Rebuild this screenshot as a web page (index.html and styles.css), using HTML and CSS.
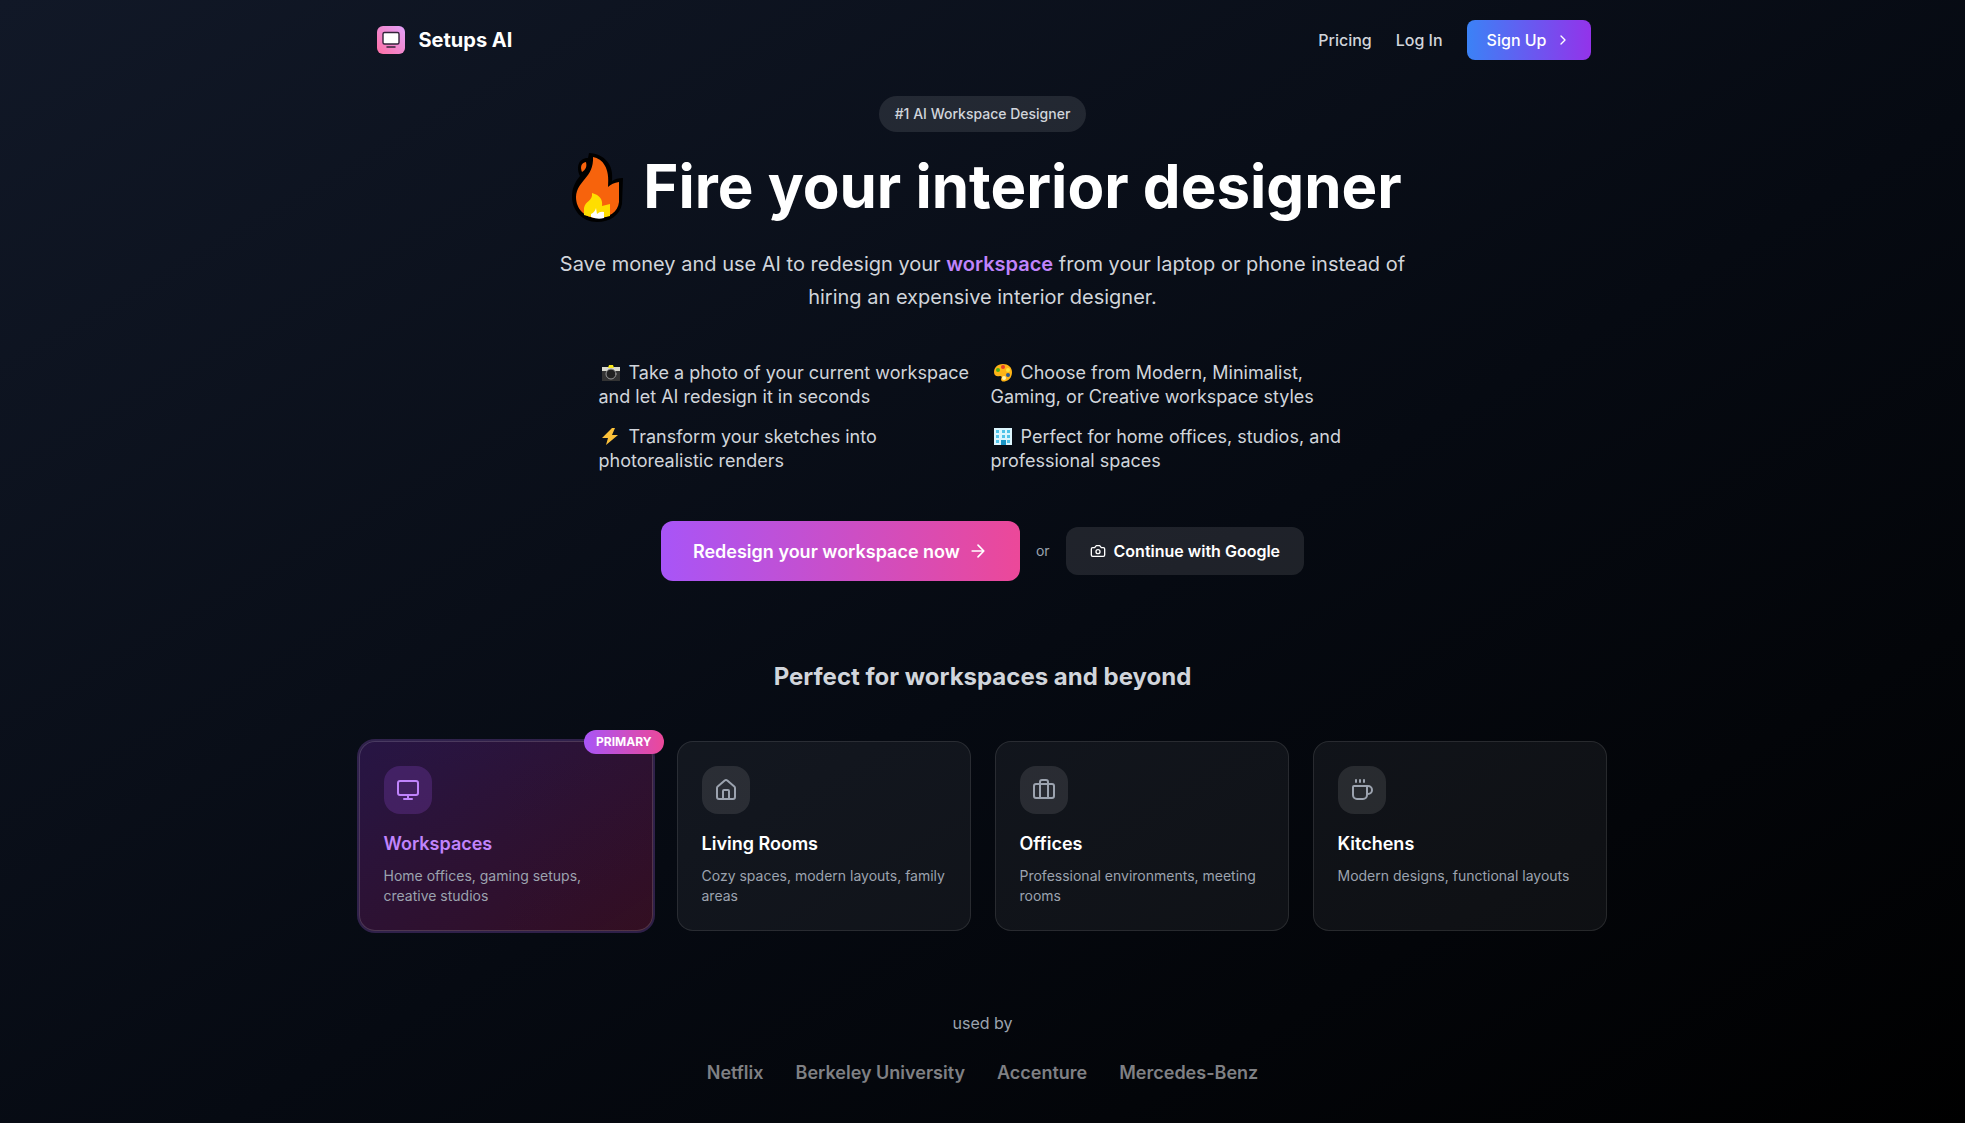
FILE: index.html
```html
<!DOCTYPE html>
<html lang="en">
<head>
    <meta charset="UTF-8">
    <meta name="viewport" content="width=device-width, initial-scale=1.0">
    <title>Setups AI</title>
    <link rel="stylesheet" href="styles.css">
</head>
<body>
    <header class="navbar">
        <a class="brand" href="#">
            <svg class="brand-logo" viewBox="0 0 32 32">
                <defs>
                    <linearGradient id="logoFill" x1="0" y1="1" x2="1" y2="0">
                        <stop offset="0" stop-color="#ff6fa3"/>
                        <stop offset="1" stop-color="#e3a2fb"/>
                    </linearGradient>
                </defs>
                <rect x="2" y="2" width="28" height="28" rx="6" fill="url(#logoFill)"/>
                <rect x="8" y="8.5" width="16" height="11.5" rx="1.5" fill="#fff" stroke="#33233a" stroke-width="1.4"/>
                <path d="M12 23h8" stroke="#33233a" stroke-width="1.5" stroke-linecap="round"/>
            </svg>
            <span>Setups AI</span>
        </a>
        <nav class="nav-links">
            <a href="#pricing">Pricing</a>
            <a href="#login">Log In</a>
            <button class="btn-signup" type="button">
                Sign Up
                <svg class="icon-sm" viewBox="0 0 24 24"><path d="m9 18 6-6-6-6"/></svg>
            </button>
        </nav>
    </header>

    <main class="container">
        <!-- Hero -->
        <section class="hero">
            <span class="badge">#1 AI Workspace Designer</span>
            <h1>
                <svg class="flame" viewBox="0 0 64 72">
                    <path d="M26 3C42 4 51 15 49 31Q53 28 60 28L59 54C57 65 47 72 34 72C19 72 9 60 9 47C9 38 12 32 17 26C13 18 15 8 25 8Z" fill="#000"/>
                    <path d="M30 7C40 9 47 18 45 37Q49 33 56 32V52C55 62 46 68 34 68C22 68 13 59 13 47C14 30 31 28 30 7Z" fill="#f7630c"/>
                    <path d="M23 12C18 13 17 17 19 22C23 19 24 17 23 12Z" fill="#f7630c"/>
                    <path d="M29 43C37 45 40 50 39 56L47 54V66Q35 70 21 65V58C22 51 30 51 29 43Z" fill="#ffde00"/>
                    <path d="M33 58L34 64Q37 61 41 62V68Q35 70 28 67V64Q32 62 33 58Z" fill="#fff"/>
                </svg>
                Fire your interior designer
            </h1>
            <p class="lead">Save money and use AI to redesign your <strong>workspace</strong> from your laptop or phone instead of hiring an expensive interior designer.</p>

            <ul class="features">
                <li>
                    <svg class="emoji" viewBox="0 0 25 20">
                        <rect x="3" y="4" width="18" height="14" fill="#333"/>
                        <path d="M3 4h18v4H3z" fill="#d9d9cf"/>
                        <path d="M9 5l1-3h4l1 3z" fill="#f8e71c"/>
                        <circle cx="12" cy="11" r="5" fill="#222" stroke="#999" stroke-width="1"/>
                    </svg>
                    Take a photo of your current workspace and let AI redesign it in seconds
                </li>
                <li>
                    <svg class="emoji" viewBox="0 0 25 20">
                        <path d="M12 1C6 1 3 5 3 9c0 4 3 5 6 4 2 0 2 1 1 3 0 3 3 3 5 2 4-1 6-5 6-9 0-5-4-8-9-8z" fill="#ffb416"/>
                        <circle cx="7" cy="7" r="2" fill="#4caf1c"/>
                        <circle cx="12" cy="4" r="2" fill="#e5402a"/>
                        <circle cx="17" cy="7" r="2" fill="#ffe13b"/>
                        <circle cx="17" cy="12" r="2" fill="#2c5792"/>
                        <circle cx="13" cy="15" r="2" fill="#fff3b0"/>
                    </svg>
                    Choose from Modern, Minimalist, Gaming, or Creative workspace styles
                </li>
                <li>
                    <svg class="emoji" viewBox="0 0 25 20">
                        <path d="M13 1L3 11h6l-2 7L19 8h-6l3-7z" fill="#fcc13a"/>
                    </svg>
                    Transform your sketches into photorealistic renders
                </li>
                <li>
                    <svg class="emoji" viewBox="0 0 25 20">
                        <path d="M3 1h18v17H3z" fill="#dcf5fd"/>
                        <path d="M5 3h3v3H5zM11 3h3v3h-3zM16 3h3v3h-3zM5 8h3v3H5zM11 8h3v3h-3zM16 8h3v3h-3zM5 13h3v3H5zM16 13h3v3h-3z" fill="#50c3e8"/>
                        <path d="M10 13h5v5h-5z" fill="#1a95c5"/>
                    </svg>
                    Perfect for home offices, studios, and professional spaces
                </li>
            </ul>

            <div class="actions">
                <button class="btn-primary" type="button">
                    Redesign your workspace now
                    <svg class="icon-md" viewBox="0 0 24 24"><path d="M5 12h14M12 5l7 7-7 7"/></svg>
                </button>
                <span class="or">or</span>
                <button class="btn-google" type="button">
                    <svg class="icon-sm" viewBox="0 0 24 24"><path d="M14.5 4h-5L7 7H4a2 2 0 0 0-2 2v9a2 2 0 0 0 2 2h16a2 2 0 0 0 2-2V9a2 2 0 0 0-2-2h-3z"/><circle cx="12" cy="13" r="3"/></svg>
                    Continue with Google
                </button>
            </div>
        </section>

        <!-- Room types -->
        <section class="rooms">
            <h2>Perfect for workspaces and beyond</h2>
            <div class="cards">
                <article class="card card-primary">
                    <span class="tag">PRIMARY</span>
                    <div class="card-icon">
                        <svg viewBox="0 0 24 24"><rect x="2" y="3" width="20" height="14" rx="2"/><path d="M8 21h8M12 17v4"/></svg>
                    </div>
                    <h3>Workspaces</h3>
                    <p>Home offices, gaming setups, creative studios</p>
                </article>
                <article class="card">
                    <div class="card-icon">
                        <svg viewBox="0 0 24 24"><path d="M15 21v-8a1 1 0 0 0-1-1h-4a1 1 0 0 0-1 1v8"/><path d="M3 10a2 2 0 0 1 .709-1.528l7-6a2 2 0 0 1 2.582 0l7 6A2 2 0 0 1 21 10v9a2 2 0 0 1-2 2H5a2 2 0 0 1-2-2z"/></svg>
                    </div>
                    <h3>Living Rooms</h3>
                    <p>Cozy spaces, modern layouts, family areas</p>
                </article>
                <article class="card">
                    <div class="card-icon">
                        <svg viewBox="0 0 24 24"><path d="M16 20V4a2 2 0 0 0-2-2h-4a2 2 0 0 0-2 2v16"/><rect x="2" y="6" width="20" height="14" rx="2"/></svg>
                    </div>
                    <h3>Offices</h3>
                    <p>Professional environments, meeting rooms</p>
                </article>
                <article class="card">
                    <div class="card-icon">
                        <svg viewBox="0 0 24 24"><path d="M10 2v2M14 2v2M6 2v2"/><path d="M16 8a1 1 0 0 1 1 1v8a4 4 0 0 1-4 4H7a4 4 0 0 1-4-4V9a1 1 0 0 1 1-1h14a4 4 0 1 1 0 8h-1"/></svg>
                    </div>
                    <h3>Kitchens</h3>
                    <p>Modern designs, functional layouts</p>
                </article>
            </div>
        </section>

        <!-- Customers -->
        <section class="used-by">
            <p>used by</p>
            <ul class="companies">
                <li>Netflix</li>
                <li>Berkeley University</li>
                <li>Accenture</li>
                <li>Mercedes-Benz</li>
            </ul>
        </section>
    </main>
</body>
</html>
```
FILE: styles.css
```css
* {
    box-sizing: border-box;
    margin: 0;
    padding: 0;
}
body {
    min-height: 100vh;
    font-family: Inter, "Liberation Sans", sans-serif;
    font-size: 16px;
    line-height: 24px;
    color: #fff;
    background: linear-gradient(to bottom right, #111827, #060a12 55%, #000);
}
a {
    color: inherit;
    text-decoration: none;
}
ul {
    list-style: none;
}
button {
    display: inline-flex;
    align-items: center;
    gap: 8px;
    border: none;
    font-family: inherit;
    font-size: 16px;
    color: #fff;
    cursor: pointer;
}
svg {
    fill: none;
    stroke-linecap: round;
    stroke-linejoin: round;
}
.icon-sm, .icon-md, .card-icon svg {
    stroke: currentColor;
    stroke-width: 2;
}
.icon-sm {
    width: 16px;
    height: 16px;
}
.icon-md {
    width: 20px;
    height: 20px;
}

/* Navbar */
.navbar {
    display: flex;
    justify-content: space-between;
    align-items: center;
    max-width: 1280px;
    margin: 0 auto;
    padding: 20px 32px;
}
.brand {
    display: flex;
    align-items: center;
    gap: 12px;
    font-size: 20px;
    font-weight: 700;
}
.brand-logo {
    width: 32px;
    height: 32px;
}
.nav-links {
    display: flex;
    align-items: center;
    gap: 24px;
    font-weight: 500;
    color: #d1d5db;
}
.btn-signup {
    height: 40px;
    padding: 0 20px;
    border-radius: 8px;
    font-weight: 500;
    background: linear-gradient(to right, #3b82f6, #9333ea);
}

/* Hero */
.container {
    max-width: 1280px;
    margin: 0 auto;
    padding: 16px 16px 48px;
}
.hero {
    display: flex;
    flex-direction: column;
    align-items: center;
}
.badge {
    padding: 8px 16px;
    border-radius: 18px;
    font-size: 14px;
    line-height: 20px;
    font-weight: 500;
    color: #d1d5db;
    background-color: rgba(255, 255, 255, 0.1);
}
h1 {
    display: flex;
    align-items: center;
    justify-content: center;
    gap: 16px;
    margin: 24px 0 32px;
    font-size: 60px;
    line-height: 60px;
    font-weight: 700;
}
.flame {
    width: 64px;
    height: 72px;
    margin: -6px 0;
}
.lead {
    max-width: 896px;
    font-size: 20px;
    line-height: 33px;
    text-align: center;
    color: #d1d5db;
}
.lead strong {
    font-weight: 600;
    color: #c084fc;
}
.features {
    display: grid;
    grid-template-columns: 1fr 1fr;
    gap: 16px;
    width: 100%;
    max-width: 768px;
    margin: 47px 0 48px;
    font-size: 18px;
    line-height: 24px;
    color: #d1d5db;
}
.emoji {
    width: 25px;
    height: 20px;
    vertical-align: -4px;
}
.actions {
    display: flex;
    align-items: center;
    gap: 16px;
}
.btn-primary {
    height: 60px;
    padding: 0 32px;
    border-radius: 12px;
    font-size: 18px;
    font-weight: 600;
    background: linear-gradient(to right, #a855f7, #ec4899);
}
.or {
    font-size: 14px;
    color: #9ca3af;
}
.btn-google {
    height: 48px;
    padding: 0 24px;
    border-radius: 12px;
    font-weight: 600;
    background-color: rgba(255, 255, 255, 0.1);
}

/* Cards */
.rooms {
    margin: 80px 0;
}
h2 {
    margin-bottom: 48px;
    font-size: 24px;
    line-height: 32px;
    font-weight: 700;
    text-align: center;
    color: #d1d5db;
}
.cards {
    display: grid;
    grid-template-columns: repeat(4, 1fr);
    gap: 24px;
}
.card {
    position: relative;
    padding: 24px;
    border: 1px solid rgba(255, 255, 255, 0.1);
    border-radius: 16px;
    background-color: rgba(255, 255, 255, 0.05);
}
.card-icon {
    display: flex;
    align-items: center;
    justify-content: center;
    width: 48px;
    height: 48px;
    margin-bottom: 16px;
    border-radius: 16px;
    color: #9ca3af;
    background-color: rgba(255, 255, 255, 0.1);
}
.card-icon svg {
    width: 24px;
    height: 24px;
}
.card h3 {
    margin-bottom: 8px;
    font-size: 18px;
    line-height: 28px;
    font-weight: 600;
}
.card p {
    font-size: 14px;
    line-height: 20px;
    color: #9ca3af;
}
.card-primary {
    border-color: rgba(255, 255, 255, 0.16);
    background: linear-gradient(to bottom right, rgba(147, 51, 234, 0.22), rgba(236, 36, 100, 0.2)) border-box;
    box-shadow: 0 0 0 2px rgba(168, 95, 230, 0.26);
}
.card-primary h3 {
    color: #c084fc;
}
.card-primary .card-icon {
    color: #c084fc;
    background-color: rgba(168, 85, 247, 0.2);
}
.tag {
    position: absolute;
    top: -12px;
    right: -12px;
    padding: 4px 12px;
    border-radius: 12px;
    font-size: 12px;
    line-height: 16px;
    font-weight: 700;
    background: linear-gradient(to right, #a855f7, #ec4899);
}

/* Used by */
.used-by {
    text-align: center;
    color: #9ca3af;
}
.companies {
    display: flex;
    justify-content: center;
    gap: 32px;
    margin-top: 24px;
    font-size: 18px;
    line-height: 28px;
    font-weight: 600;
    color: #7f8084;
}

@media (max-width: 900px) {
    .cards {
        grid-template-columns: 1fr 1fr;
    }
    .features {
        grid-template-columns: 1fr;
    }
    .actions, .companies {
        flex-wrap: wrap;
        justify-content: center;
    }
    h1 {
        font-size: 36px;
    }
}
```
